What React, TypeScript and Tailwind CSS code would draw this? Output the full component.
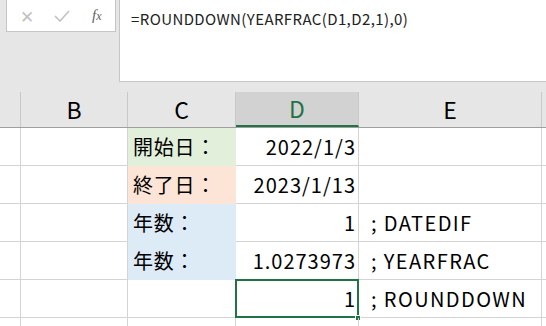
import React from "react";

const grid = "border-[#d4d4d4]";
const cjk = { fontFamily: '"Noto Sans CJK JP", "Noto Sans", sans-serif' };

type Row = {
  c?: string;
  cFill?: string;
  d?: string;
  e?: string;
  selected?: boolean;
};

const rows: Row[] = [
  { c: "開始日：", cFill: "bg-[#e2efda] border-[#e2efda]", d: "2022/1/3" },
  { c: "終了日：", cFill: "bg-[#fce4d6] border-[#fce4d6]", d: "2023/1/13" },
  { c: "年数：", cFill: "bg-[#ddebf7] border-[#ddebf7]", d: "1", e: "; DATEDIF" },
  { c: "年数：", cFill: "bg-[#ddebf7] border-[#ddebf7]", d: "1.0273973", e: "; YEARFRAC" },
  { d: "1", e: "; ROUNDDOWN", selected: true },
  {},
];

function HeaderCell({ label, w, active }: { label?: string; w: string; active?: boolean }) {
  return (
    <div
      className={`${w} shrink-0 h-full flex items-center justify-center border-r border-[#c8c8c8] text-[23px] ${
        active ? "bg-[#d2d2d2] text-[#217346] border-b-2 border-b-[#217346]" : "text-black"
      }`}
    >
      {label}
    </div>
  );
}

export default function App() {
  return (
    <div className="w-[546px] h-[326px] overflow-hidden bg-white select-none" style={cjk}>
      {/* formula bar */}
      <div className="flex h-[92px] bg-[#e6e6e6] items-start">
        <div className="ml-[6px] mt-0 w-[110px] h-[32px] bg-white border border-[#c6c6c6] border-t-0 flex items-center">
          <span className="ml-[13px] text-[#c2c2c2] text-[17px] leading-none">✕</span>
          <svg className="ml-[20px]" width="16" height="12" viewBox="0 0 16 12">
            <path d="M1 6 L6 11 L15 1" fill="none" stroke="#c2c2c2" strokeWidth="1.6" />
          </svg>
          <span
            className="ml-[22px] text-[#5f5f5f] italic text-[15px] leading-none"
            style={{ fontFamily: '"Liberation Serif", serif' }}
          >
            f<span className="text-[12px]">x</span>
          </span>
        </div>
        <div className="ml-[3px] flex-1 h-[82px] bg-white border-l border-b border-[#c6c6c6] pl-[11px] pt-[6px]">
          <span className="text-[15px] text-[#222] tracking-[0.4px]">=ROUNDDOWN(YEARFRAC(D1,D2,1),0)</span>
        </div>
      </div>

      {/* column headers */}
      <div className="flex h-[36px] bg-[#e6e6e6] border-b border-[#9f9f9f]">
        <HeaderCell w="w-[21px]" />
        <HeaderCell w="w-[107px]" label="B" />
        <HeaderCell w="w-[108px]" label="C" />
        <HeaderCell w="w-[123px]" label="D" active />
        <HeaderCell w="w-[183px]" label="E" />
        <HeaderCell w="w-[10px]" />
      </div>

      {/* rows */}
      {rows.map((r, i) => (
        <div key={i} className="flex h-[38px] text-[20px] text-black">
          <div className={`w-[21px] shrink-0 border-r border-b ${grid}`} />
          <div className={`w-[107px] shrink-0 border-r border-b ${grid}`} />
          <div
            className={`w-[108px] shrink-0 border-r border-b flex items-center pl-[5px] tracking-[0.8px] ${r.cFill ?? grid}`}
          >
            {r.c}
          </div>
          <div className={`relative w-[123px] shrink-0 border-r border-b ${grid} flex items-center justify-end pr-[2px] tracking-[1px]`}>
            {r.d}
            {r.selected && (
              <>
                <div className="absolute -left-[1px] -top-[1px] -right-[1px] -bottom-[1px] border-2 border-[#217346]" />
                <div className="absolute -right-[3px] -bottom-[4px] w-[6px] h-[6px] bg-[#217346] border border-white" />
              </>
            )}
          </div>
          <div className={`w-[183px] shrink-0 border-r border-b ${grid} flex items-center pl-[12px] whitespace-pre tracking-[1.4px]`}>
            {r.e}
          </div>
          <div className={`flex-1 border-b ${grid}`} />
        </div>
      ))}
    </div>
  );
}
